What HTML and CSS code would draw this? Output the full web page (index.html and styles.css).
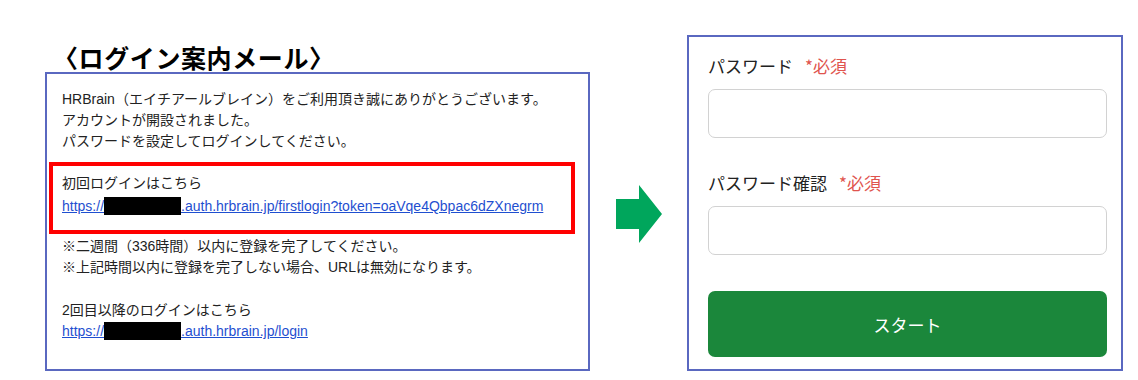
FILE: index.html
```html
<!DOCTYPE html>
<html lang="ja">
<head>
<meta charset="utf-8">
<title>ログイン案内</title>
<link rel="stylesheet" href="styles.css">
</head>
<body>
<div class="page">
  <section class="mail-col">
    <h2 class="mail-title">〈ログイン案内メール〉</h2>
    <div class="mail-box">
      <p class="para">HRBrain（エイチアールブレイン）をご利用頂き誠にありがとうございます。<br>アカウントが開設されました。<br>パスワードを設定してログインしてください。</p>
      <div class="highlight">
        <div class="line">初回ログインはこちら</div>
        <div class="line"><a class="link" href="#">https://<span class="redact"></span>.auth.hrbrain.jp/firstlogin?token=oaVqe4Qbpac6dZXnegrm</a></div>
      </div>
      <p class="para note">※二週間（336時間）以内に登録を完了してください。<br>※上記時間以内に登録を完了しない場合、URLは無効になります。</p>
      <p class="para second">2回目以降のログインはこちら<br><a class="link" href="#">https://<span class="redact"></span>.auth.hrbrain.jp/login</a></p>
    </div>
  </section>
  <div class="arrow">
    <svg width="46" height="58" viewBox="0 0 46 58"><polygon points="0,14 23,14 23,0 46,29 23,58 23,44 0,44" fill="#00a65c"/></svg>
  </div>
  <section class="form-box">
    <label class="field-label">パスワード<span class="req">*必須</span></label>
    <div class="input"></div>
    <label class="field-label second-label">パスワード確認<span class="req">*必須</span></label>
    <div class="input"></div>
    <button class="start-btn" type="button">スタート</button>
  </section>
</div>
</body>
</html>
```
FILE: styles.css
```css
html, body {
  margin: 0;
  padding: 0;
  background: #ffffff;
}
body {
  font-family: "Liberation Sans", "Noto Sans CJK JP", sans-serif;
  color: #222222;
}
.page {
  display: flex;
  align-items: flex-start;
  padding: 35px 0 0 45px;
}
.mail-col {
  display: flex;
  flex-direction: column;
  width: 545px;
}
.mail-title {
  margin: 0;
  height: 37px;
  box-sizing: border-box;
  padding-left: 8px;
  font-family: "Noto Sans CJK JP", sans-serif;
  font-size: 25px;
  font-weight: 700;
  letter-spacing: 0.6px;
  line-height: 30px;
  padding-top: 7px;
  color: #000;
}
.mail-box {
  box-sizing: border-box;
  height: 299px;
  border: 2px solid #5a68c0;
  padding: 15px 15px 0 15px;
  font-size: 14px;
  line-height: 21px;
}
.para {
  margin: 0;
}
.highlight {
  margin: 10px 0 0 -13px;
  width: 526px;
  box-sizing: border-box;
  border: 4px solid #ff0000;
  padding: 6px 9px 12px 9px;
  line-height: 23px;
}
.note {
  margin-top: 2px;
}
.second {
  margin-top: 22px;
}
.link {
  color: #1f4fd0;
  text-decoration: underline;
}
.redact {
  display: inline-block;
  width: 77px;
  height: 18px;
  background: #000;
  vertical-align: -4px;
}
.arrow {
  margin: 150px 25px 0 26px;
  width: 46px;
  height: 58px;
}
.arrow svg {
  display: block;
}
.form-box {
  box-sizing: border-box;
  width: 436px;
  height: 336px;
  border: 2px solid #5a68c0;
  padding: 17px 14px 0 19px;
  display: flex;
  flex-direction: column;
  font-family: "Noto Sans CJK JP", sans-serif;
}
.field-label {
  display: block;
  font-size: 17px;
  line-height: 24px;
  color: #222;
}
.req {
  color: #e0544e;
  margin-left: 12px;
}
.second-label {
  margin-top: 33px;
}
.input {
  margin-top: 11px;
  height: 49px;
  box-sizing: border-box;
  border: 1px solid #d2d2d2;
  border-radius: 7px;
  background: #fff;
}
.start-btn {
  margin-top: 36px;
  height: 66px;
  border: none;
  border-radius: 7px;
  background: #1b873b;
  color: #fff;
  font-family: "Noto Sans CJK JP", sans-serif;
  font-size: 17px;
  padding: 0;
}
```
